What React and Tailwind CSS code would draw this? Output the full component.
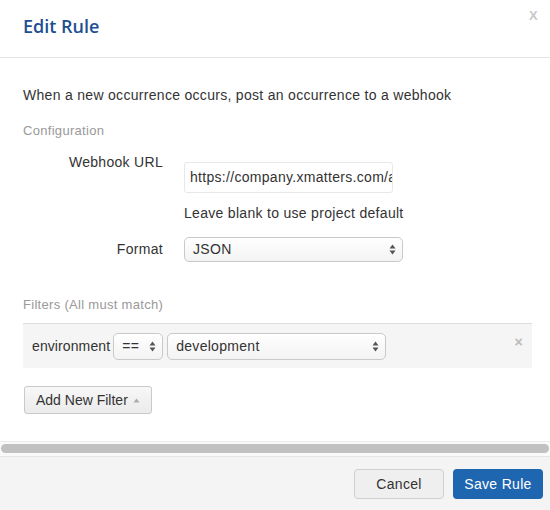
import React from "react";

function Arrows() {
  return (
    <svg width="7" height="11" viewBox="0 0 7 11" className="shrink-0">
      <path d="M3.5 0.5 L6.5 4.5 L0.5 4.5 Z" fill="#555" />
      <path d="M3.5 10.5 L6.5 6.5 L0.5 6.5 Z" fill="#555" />
    </svg>
  );
}

function Select({ value, className }) {
  return (
    <div
      className={`flex items-center justify-between border border-[#c9c9c9] rounded-[5px] bg-gradient-to-b from-white to-[#f3f3f3] pl-[8px] pr-[6px] text-[14px] text-[#333] ${className}`}
    >
      <span>{value}</span>
      <Arrows />
    </div>
  );
}

export default function App() {
  return (
    <div
      className="w-[550px] h-[510px] bg-white flex flex-col overflow-hidden relative text-[#333] tracking-[0.3px]"
      style={{ fontFamily: '"Liberation Sans", Arial, sans-serif' }}
    >
      {/* Header */}
      <div className="h-[58px] shrink-0 border-b border-[#e5e5e5] px-[23px] flex items-center">
        <h1
          className="text-[18px] font-semibold text-[#1e4f91] mt-[-4px] tracking-normal"
          style={{ fontFamily: '"Open Sans", sans-serif' }}
        >
          Edit Rule
        </h1>
        <span className="absolute right-[12px] top-[6px] text-[13px] font-bold text-[#c8c8c8]">
          X
        </span>
      </div>

      {/* Body */}
      <div className="flex-1 px-[23px] pt-[27px] text-[14px]">
        <p className="leading-[20px]">When a new occurrence occurs, post an occurrence to a webhook</p>
        <p className="mt-[16px] leading-[20px] text-[13px] text-[#999]">Configuration</p>

        <div className="mt-[11px] grid grid-cols-[140px_1fr] gap-x-[21px]">
          <div className="text-right leading-[20px]">Webhook URL</div>
          <div>
            <div className="mt-[10px] w-[209px] h-[31px] border border-[#e8e8e8] rounded-[3px] flex items-center pl-[5px] overflow-hidden whitespace-nowrap">
              https://company.xmatters.com/api/integration
            </div>
            <p className="mt-[10px] leading-[20px]">Leave blank to use project default</p>
          </div>

          <div className="mt-[14px] h-[25px] flex items-center justify-end">Format</div>
          <div className="mt-[14px]">
            <Select value="JSON" className="w-[219px] h-[25px]" />
          </div>
        </div>

        <p className="mt-[33px] leading-[20px] text-[13px] text-[#999]">Filters (All must match)</p>

        <div className="mt-[8px] w-[509px] h-[45px] border-t border-[#dddddd] bg-[#f5f5f5] flex items-center pl-[9px] relative">
          <span className="mr-[3px] tracking-[0.1px]">environment</span>
          <Select value="==" className="w-[50px] h-[27px] rounded-[4px]" />
          <Select value="development" className="ml-[4px] w-[219px] h-[27px] rounded-[4px]" />
          <span className="absolute right-[9px] top-[8px] text-[14px] text-[#bbb] font-bold">×</span>
        </div>

        <button className="mt-[18px] ml-[1px] h-[28px] px-[11px] border border-[#c9c9c9] rounded-[3px] bg-gradient-to-b from-[#f7f7f7] to-[#ebebeb] flex items-center gap-[5px] text-[14px] text-[#333] tracking-[0px]">
          Add New Filter
          <svg width="7" height="5" viewBox="0 0 7 5">
            <path d="M3.5 0.5 L6.5 4.5 L0.5 4.5 Z" fill="#aaa" />
          </svg>
        </button>
      </div>

      {/* Horizontal scrollbar */}
      <div className="shrink-0 border-t border-[#ececec] bg-[#fafafa] pt-[2px] pb-[3px] px-[1px]">
        <div className="h-[9px] rounded-full bg-[#c1c1c1]" />
      </div>

      {/* Footer */}
      <div className="shrink-0 h-[54px] border-t border-[#e5e5e5] bg-[#f4f4f4] flex justify-end items-start pt-[12px] pr-[7px] gap-[9px]">
        <button className="w-[90px] h-[30px] border border-[#cfcfcf] rounded-[4px] bg-[#efefef] text-[14px] text-[#333]">
          Cancel
        </button>
        <button className="w-[90px] h-[30px] rounded-[4px] bg-[#1f66b1] text-[14px] text-white">
          Save Rule
        </button>
      </div>
    </div>
  );
}
